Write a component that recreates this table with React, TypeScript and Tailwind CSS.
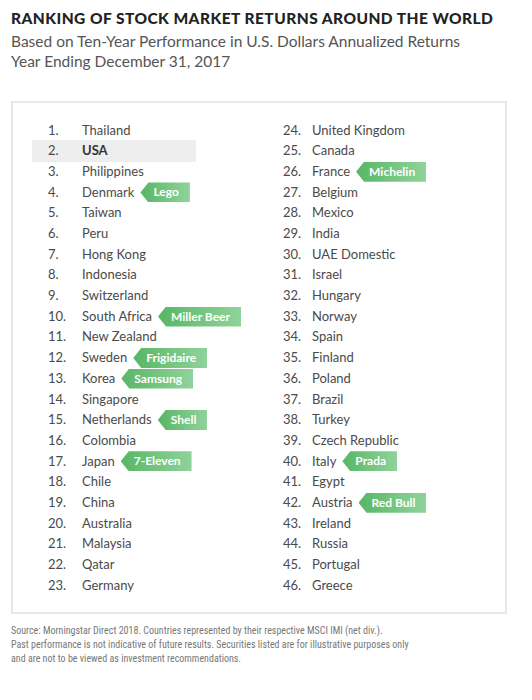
const left: [string, string?][] = [
  ['Thailand'], ['USA'], ['Philippines'], ['Denmark', 'Lego'], ['Taiwan'], ['Peru'],
  ['Hong Kong'], ['Indonesia'], ['Switzerland'], ['South Africa', 'Miller Beer'],
  ['New Zealand'], ['Sweden', 'Frigidaire'], ['Korea', 'Samsung'], ['Singapore'],
  ['Netherlands', 'Shell'], ['Colombia'], ['Japan', '7-Eleven'], ['Chile'], ['China'],
  ['Australia'], ['Malaysia'], ['Qatar'], ['Germany'],
];

const right: [string, string?][] = [
  ['United Kingdom'], ['Canada'], ['France', 'Michelin'], ['Belgium'], ['Mexico'], ['India'],
  ['UAE Domestic'], ['Israel'], ['Hungary'], ['Norway'], ['Spain'], ['Finland'], ['Poland'],
  ['Brazil'], ['Turkey'], ['Czech Republic'], ['Italy', 'Prada'], ['Egypt'],
  ['Austria', 'Red Bull'], ['Ireland'], ['Russia'], ['Portugal'], ['Greece'],
];

function Tag({ label }: { label: string }) {
  return (
    <span className="ml-[6px] flex h-[20px] items-center bg-linear-to-r from-[#57b665] to-[#8fd39a] pl-[13px] pr-[11px] text-[12px] font-bold text-white [clip-path:polygon(8px_0,100%_0,100%_100%,8px_100%,0_50%)]">
      {label}
    </span>
  );
}

function Row({ rank, name, tag, numW }: { rank: number; name: string; tag?: string; numW: string }) {
  const usa = name === 'USA';
  return (
    <div className={`flex h-[20.7px] items-center ${usa ? 'relative' : ''}`}>
      {usa && <div className="absolute left-[-16px] top-[-1px] h-[22px] w-[164px] bg-[#eeeeee]" />}
      <span className={`relative ${numW}`}>{rank}.</span>
      <span className={`relative ${usa ? 'font-bold text-[#333]' : ''}`}>{name}</span>
      {tag && <Tag label={tag} />}
    </div>
  );
}

export default function App() {
  return (
    <div className="h-[700px] w-[532px] bg-white pl-[11px] pt-[8px] font-['Lato',sans-serif] text-[#4a4a4a]">
      <h1 className="text-[15.5px] font-black leading-[20px] tracking-[0.45px] text-[#222]">
        RANKING OF STOCK MARKET RETURNS AROUND THE WORLD
      </h1>
      <p className="mt-[3px] text-[15.5px] leading-[20px] text-[#555]">
        Based on Ten-Year Performance in U.S. Dollars Annualized Returns
        <br />
        Year Ending December 31, 2017
      </p>
      <div className="mt-[30px] flex h-[513px] w-[496px] border-2 border-[#e8e8e8] pl-[35px] pt-[17px] text-[13px]">
        <div className="w-[235px]">
          {left.map(([n, t], i) => (
            <Row key={n} rank={i + 1} name={n} tag={t} numW="w-[34px]" />
          ))}
        </div>
        <div>
          {right.map(([n, t], i) => (
            <Row key={n} rank={i + 24} name={n} tag={t} numW="w-[29px]" />
          ))}
        </div>
      </div>
      <p className="mt-[10px] font-['Liberation_Sans_Narrow','Roboto_Condensed',sans-serif] text-[10px] leading-[14px] text-[#777]">
        Source: Morningstar Direct 2018. Countries represented by their respective MSCI IMI (net div.).
        <br />
        Past performance is not indicative of future results. Securities listed are for illustrative purposes only
        <br />
        and are not to be viewed as investment recommendations.
      </p>
    </div>
  );
}
